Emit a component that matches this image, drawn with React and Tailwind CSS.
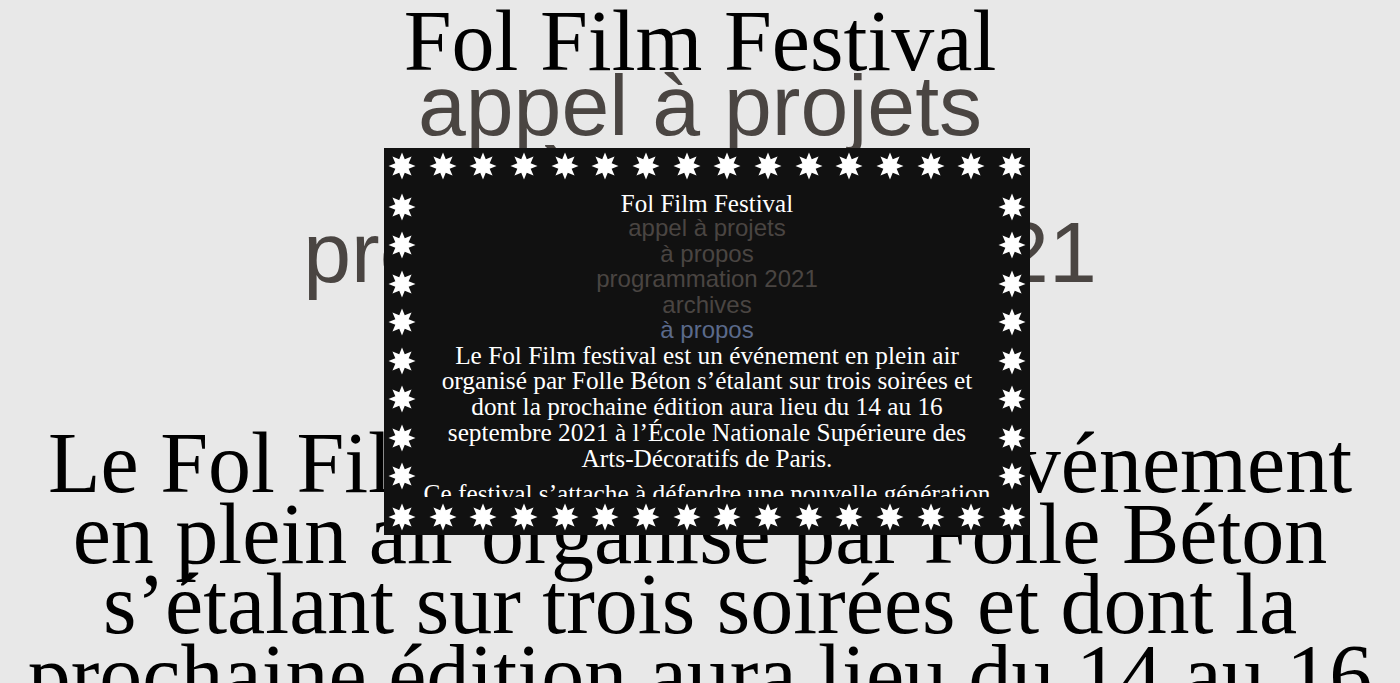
import React from "react";

const STAR_POINTS = Array.from({ length: 16 }, (_, i) => {
  const a = ((i * 22.5 - 90) * Math.PI) / 180;
  const r = i % 2 === 0 ? 13.5 : 7.2;
  return `${(r * Math.cos(a)).toFixed(2)},${(r * Math.sin(a)).toFixed(2)}`;
}).join(" ");

function Star() {
  return (
    <svg width="28" height="28" viewBox="-14 -14 28 28" className="block shrink-0">
      <polygon points={STAR_POINTS} fill="#ffffff" />
    </svg>
  );
}

const serif = "font-['Liberation_Serif','Times_New_Roman',serif]";
const sans = "font-['Liberation_Sans',Arial,sans-serif]";

const navItems = ["appel à projets", "à propos", "programmation 2021", "archives"];

const para1 =
  "Le Fol Film festival est un événement en plein air organisé par Folle Béton s’étalant sur trois soirées et dont la prochaine édition aura lieu du 14 au 16 septembre 2021 à l’École Nationale Supérieure des Arts-Décoratifs de Paris.";
const para2 =
  "Ce festival s’attache à défendre une nouvelle génération de cinéastes en présentant des courts-métrages d’étudiants et de jeunes réalisateurs.";

export default function App() {
  return (
    <div className="min-h-screen bg-[#e8e8e8] text-black text-center">
      <h1 className={`${serif} text-[86px] leading-[55px] pt-[13.5px] font-normal text-black`}>
        Fol Film Festival
      </h1>
      <nav className={`${sans} text-[86px] leading-[73.5px] text-[#4a4542]`}>
        {navItems.map((t) => (
          <div key={t}>{t}</div>
        ))}
        <div className="text-[#5b6a8b]">à propos</div>
      </nav>
      <div className={`${serif} text-[86px] leading-[70.5px] px-[8px] mt-[-8px]`}>
        <p>{para1}</p>
        <p className="mt-[30px]">{para2}</p>
      </div>

      <div className="fixed left-[384px] top-[148px] w-[646px] h-[387px] bg-[#111111] flex flex-col p-[4px]">
        <div className="flex justify-between">
          {Array.from({ length: 16 }, (_, i) => (
            <Star key={i} />
          ))}
        </div>
        <div className="flex flex-1 min-h-0">
          <div className="flex flex-col justify-center gap-[10.5px]">
            {Array.from({ length: 8 }, (_, i) => (
              <Star key={i} />
            ))}
          </div>
          <div className="flex-1 min-w-0 overflow-hidden px-[5px] pt-[13px] mb-[6px] text-center">
            <div className={`${serif} text-[25px] leading-[22px] text-white`}>Fol Film Festival</div>
            <div className={`${sans} text-[24px] leading-[25.5px] text-[#4a4542]`}>
              {navItems.map((t) => (
                <div key={t}>{t}</div>
              ))}
              <div className="text-[#5b6a8b]">à propos</div>
            </div>
            <div className={`${serif} text-[25.3px] leading-[25.8px] text-white`}>
              <p>{para1}</p>
              <p className="mt-[9.5px]">{para2}</p>
            </div>
          </div>
          <div className="flex flex-col justify-center gap-[10.5px]">
            {Array.from({ length: 8 }, (_, i) => (
              <Star key={i} />
            ))}
          </div>
        </div>
        <div className="flex justify-between">
          {Array.from({ length: 16 }, (_, i) => (
            <Star key={i} />
          ))}
        </div>
      </div>
    </div>
  );
}
